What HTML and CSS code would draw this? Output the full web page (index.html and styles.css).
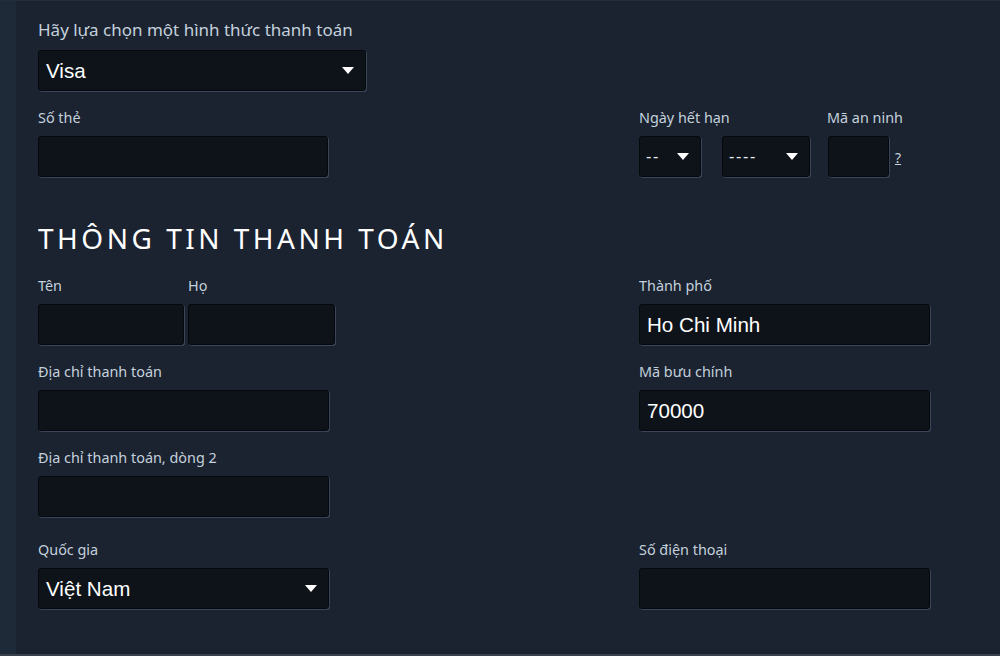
FILE: index.html
```html
<!DOCTYPE html>
<html lang="vi">
<head>
<meta charset="utf-8">
<title>Thanh toán</title>
<link rel="stylesheet" href="styles.css">
</head>
<body>
<div class="page">
  <div class="strip"></div>
  <main class="form">
    <section class="method">
      <div class="lbl lbl-lg">Hãy lựa chọn một hình thức thanh toán</div>
      <div class="box select w-method"><span class="val">Visa</span><i class="arrow"></i></div>
    </section>

    <div class="row row-card">
      <div class="field">
        <div class="lbl">Số thẻ</div>
        <div class="box w-card"></div>
      </div>
      <div class="card-extra">
        <div class="field">
          <div class="lbl">Ngày hết hạn</div>
          <div class="expiry">
            <div class="box select small w-month"><span class="val-sm">--</span><i class="arrow"></i></div>
            <div class="box select small w-year"><span class="val-sm">----</span><i class="arrow"></i></div>
          </div>
        </div>
        <div class="field">
          <div class="lbl">Mã an ninh</div>
          <div class="cvv">
            <div class="box w-cvv"></div>
            <a class="help">?</a>
          </div>
        </div>
      </div>
    </div>

    <h2 class="heading">THÔNG TIN THANH TOÁN</h2>

    <div class="row">
      <div class="names">
        <div class="field">
          <div class="lbl">Tên</div>
          <div class="box w-first"></div>
        </div>
        <div class="field">
          <div class="lbl">Họ</div>
          <div class="box w-last"></div>
        </div>
      </div>
      <div class="field">
        <div class="lbl">Thành phố</div>
        <div class="box w-wide"><span class="val">Ho Chi Minh</span></div>
      </div>
    </div>

    <div class="row">
      <div class="field">
        <div class="lbl">Địa chỉ thanh toán</div>
        <div class="box w-wide"></div>
      </div>
      <div class="field">
        <div class="lbl">Mã bưu chính</div>
        <div class="box w-wide"><span class="val">70000</span></div>
      </div>
    </div>

    <div class="row row-gap">
      <div class="field">
        <div class="lbl">Địa chỉ thanh toán, dòng 2</div>
        <div class="box w-wide"></div>
      </div>
      <div></div>
    </div>

    <div class="row">
      <div class="field">
        <div class="lbl">Quốc gia</div>
        <div class="box select w-wide"><span class="val">Việt Nam</span><i class="arrow"></i></div>
      </div>
      <div class="field">
        <div class="lbl">Số điện thoại</div>
        <div class="box w-wide"></div>
      </div>
    </div>
  </main>
</div>
</body>
</html>
```

FILE: styles.css
```css
* { box-sizing: border-box; }
html, body {
  margin: 0;
  padding: 0;
  width: 1000px;
  height: 656px;
  overflow: hidden;
  background: #1b2331;
}
.page {
  display: flex;
  width: 1000px;
  height: 656px;
  border-top: 1px solid #222c3a;
  border-bottom: 2px solid #39414c;
}
.strip {
  width: 16px;
  flex: none;
  background: #1f2a39;
}
.form {
  flex: 1;
  padding: 19px 0 0 22px;
  font-family: "Noto Sans", "Liberation Sans", sans-serif;
}
.lbl {
  color: #c4d1dc;
  font-size: 14.4px;
  line-height: 18px;
  height: 18px;
  margin-bottom: 9px;
  white-space: nowrap;
}
.lbl-lg {
  font-size: 17px;
  line-height: 20px;
  height: 20px;
  margin-bottom: 10px;
}
.method { margin-bottom: 18px; }
.box {
  height: 41px;
  background: #0e131a;
  border: 1px solid #05080c;
  border-radius: 3px;
  box-shadow: 1px 1px 0 #3a4657;
  display: flex;
  align-items: center;
  padding: 0 7px;
}
.select { justify-content: space-between; padding-right: 11px; }
.val {
  color: #ffffff;
  font-family: "Liberation Sans", Arial, sans-serif;
  font-size: 20.6px;
  line-height: 24px;
}
.val-sm {
  color: #e8edf2;
  font-family: "Liberation Sans", Arial, sans-serif;
  font-size: 16px;
  letter-spacing: 1.7px;
}
.small { padding-left: 6px; }
.arrow {
  width: 0;
  height: 0;
  border-left: 6px solid transparent;
  border-right: 6px solid transparent;
  border-top: 7px solid #ffffff;
}
.w-method { width: 328px; }
.w-card { width: 290px; }
.w-wide { width: 291px; }
.w-first { width: 146px; }
.w-last { width: 147px; }
.w-month { width: 62px; }
.w-year { width: 88px; }
.w-cvv { width: 61px; }
.row {
  display: grid;
  grid-template-columns: 601px 1fr;
  margin-bottom: 18px;
}
.row-card { margin-bottom: 0; }
.row-gap { margin-bottom: 24px; }
.card-extra { display: flex; gap: 17px; }
.expiry { display: flex; gap: 21px; }
.cvv { display: flex; align-items: center; gap: 6px; }
.cvv .box { margin-left: 1px; }
.help {
  color: #c4d1dc;
  font-size: 14px;
  text-decoration: underline;
  margin-top: 2px;
}
.names { display: flex; gap: 4px; }
.heading {
  margin: 44px 0 22px;
  color: #ffffff;
  font-weight: 400;
  font-size: 28px;
  line-height: 34px;
  letter-spacing: 3.5px;
}
```
